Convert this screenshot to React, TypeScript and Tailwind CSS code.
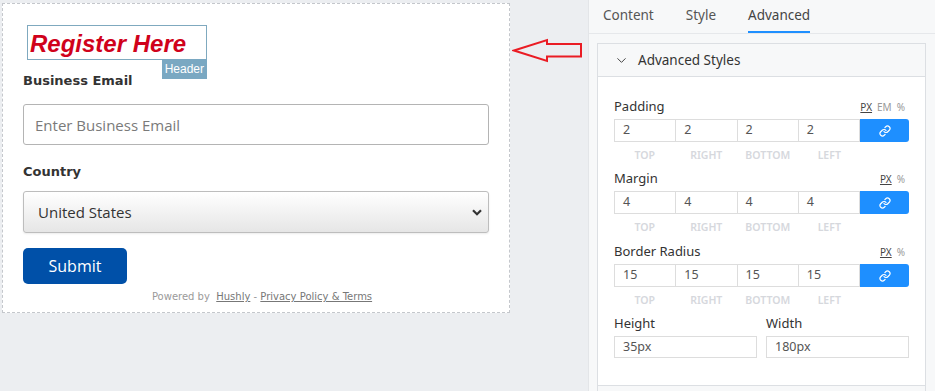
import { ChevronDown, Link } from "lucide-react";

const formFont = { fontFamily: '"Open Sans", "DejaVu Sans", sans-serif' };
const labelFont = { fontFamily: '"DejaVu Sans", Verdana, sans-serif' };
const panelFont = { fontFamily: '"Noto Sans", "Open Sans", sans-serif' };

function App() {
  return (
    <div className="flex h-[391px] w-[935px] overflow-hidden bg-[#eceef1]">
      <FormPreview />
      <div className="flex w-[78px] shrink-0 items-start pl-[2px] pt-[38px]">
        <PointerArrow />
      </div>
      <SettingsPanel />
    </div>
  );
}

function FormPreview() {
  return (
    <div className="shrink-0 pl-[2px] pt-[3px]">
      <div
        className="flex w-[508px] flex-col border border-dashed border-[#c4c7cc] bg-white pb-[8px] pl-[20px] pr-[20px] pt-[21px]"
        style={formFont}
      >
        <div className="relative ml-[4px] h-[35px] w-[180px] border border-[#7fa9bf] px-[2px] pt-[2px]">
          <span
            className="block text-[24px] font-bold italic leading-[31px] text-[#d0021b]"
            style={{ fontFamily: '"Liberation Sans", Arial, sans-serif' }}
          >
            Register Here
          </span>
          <span
            className="absolute -right-px top-[33px] bg-[#7aa8c2] px-[3px] text-[12px] leading-[20px] text-white"
            style={{ fontFamily: '"Liberation Sans", Arial, sans-serif' }}
          >
            Header
          </span>
        </div>

        <label className="mt-[12px] text-[13px] font-bold leading-[18px] text-[#333]" style={labelFont}>
          Business Email
        </label>
        <input
          type="text"
          placeholder="Enter Business Email"
          className="mt-[14px] h-[41px] w-[466px] rounded-[3px] border border-[#b4b4b4] px-[11px] text-[15px] text-[#333] placeholder:text-[#7a7a7a] outline-none"
        />

        <label className="mt-[18px] text-[13px] font-bold leading-[18px] text-[#333]" style={labelFont}>
          Country
        </label>
        <div className="relative mt-[10px] flex h-[42px] w-[466px] items-center rounded-[3px] border border-[#bdbdbd] bg-gradient-to-b from-white to-[#e6e6e6] pl-[14px] text-[15px] text-[#333] shadow-[0_1px_2px_rgba(0,0,0,0.08)]">
          United States
          <svg className="absolute right-[6px] top-[17px]" width="10" height="7" viewBox="0 0 10 7">
            <path d="M1 1.2 5 5.2 9 1.2" fill="none" stroke="#333" strokeWidth="2.2" />
          </svg>
        </div>

        <button
          type="button"
          className="mt-[15px] h-[36px] w-[104px] rounded-[5px] bg-[#0050a8] text-[16px] text-white"
        >
          Submit
        </button>

        <div className="mt-[6px] pl-[12px] text-center text-[10px] leading-[14px] text-[#9a9a9a]" style={labelFont}>
          Powered by&nbsp; <span className="text-[#777] underline">Hushly</span> -{" "}
          <span className="text-[#777] underline">Privacy Policy &amp; Terms</span>
        </div>
      </div>
    </div>
  );
}

function PointerArrow() {
  return (
    <svg width="72" height="26" viewBox="0 0 72 26">
      <path
        d="M2 12.5 L35 2 L35 6 L69 6 L69 18.5 L35 18.5 L35 23 Z"
        fill="none"
        stroke="#ea1c24"
        strokeWidth="2"
        strokeLinejoin="miter"
      />
    </svg>
  );
}

function SettingsPanel() {
  return (
    <div className="flex w-[347px] shrink-0 flex-col border-l border-[#e3e5e8] bg-[#f7f8f9]" style={panelFont}>
      <div className="flex h-[34px] shrink-0 border-b border-[#e6e8eb] pl-[14px] text-[13.5px] text-[#555]">
        <Tab>Content</Tab>
        <Tab>Style</Tab>
        <Tab active>Advanced</Tab>
      </div>

      <div className="ml-[8px] mt-[9px] w-[329px] shrink-0 border border-[#dcdfe3]">
        <div className="flex h-[33px] items-center border-b border-[#dcdfe3] bg-[#f7f8f9] pl-[16px] text-[13.5px] text-[#333]">
          <ChevronDown size={15} strokeWidth={1.6} className="text-[#444]" />
          <span className="ml-[9px]">Advanced Styles</span>
        </div>

        <div className="bg-white px-[16px] pb-[27px] pt-[22px]">
          <SpacingGroup label="Padding" value="2" units={["PX", "EM", "%"]} />
          <SpacingGroup label="Margin" value="4" units={["PX", "%"]} className="mt-[9px]" />
          <SpacingGroup label="Border Radius" value="15" units={["PX", "%"]} className="mt-[10px]" />

          <div className="mt-[8px] flex gap-[9px]">
            <SizeField label="Height" value="35px" />
            <SizeField label="Width" value="180px" />
          </div>
        </div>
      </div>
      <div className="ml-[8px] h-[6px] w-[329px] shrink-0 border-x border-[#dcdfe3]" />
    </div>
  );
}

function Tab({ active, children }: { active?: boolean; children: React.ReactNode }) {
  return (
    <div className={`mr-[32px] flex flex-col justify-end ${active ? "text-[#444]" : ""}`}>
      <span className="leading-[18px]">{children}</span>
      <div className={`mt-[7px] h-[2px] ${active ? "bg-[#1e8fff]" : "bg-transparent"}`} />
    </div>
  );
}

function SpacingGroup({
  label,
  value,
  units,
  className = "",
}: {
  label: string;
  value: string;
  units: string[];
  className?: string;
}) {
  return (
    <div className={className}>
      <div className="flex h-[16px] items-center justify-between text-[13px] text-[#333]">
        <span>{label}</span>
        <div className="flex gap-[5px] pr-[4px] text-[10px] text-[#999]">
          {units.map((u, i) => (
            <span key={u} className={i === 0 ? "text-[#444] underline" : ""}>
              {u}
            </span>
          ))}
        </div>
      </div>
      <div className="mt-[4px] flex h-[23px]">
        {[0, 1, 2, 3].map((i) => (
          <div
            key={i}
            className={`flex h-full flex-1 items-center border border-[#dddddd] pl-[8px] text-[12.5px] text-[#555] ${i > 0 ? "-ml-px" : ""}`}
          >
            {value}
          </div>
        ))}
        <div className="flex h-full w-[49px] items-center justify-center rounded-r-[3px] bg-[#1e8fff]">
          <Link size={12} strokeWidth={2.4} className="text-white" />
        </div>
      </div>
      <div className="mt-[6px] flex h-[14px] text-[10.5px] font-semibold uppercase text-[#d6d8dd]">
        {["Top", "Right", "Bottom", "Left"].map((s) => (
          <span key={s} className="w-[61.5px] text-center">
            {s}
          </span>
        ))}
      </div>
    </div>
  );
}

function SizeField({ label, value }: { label: string; value: string }) {
  return (
    <div className="flex-1">
      <div className="h-[16px] text-[13px] leading-[16px] text-[#333]">{label}</div>
      <div className="mt-[5px] flex h-[22px] items-center border border-[#dddddd] pl-[8px] text-[12.5px] text-[#555]">
        {value}
      </div>
    </div>
  );
}

export default App;
